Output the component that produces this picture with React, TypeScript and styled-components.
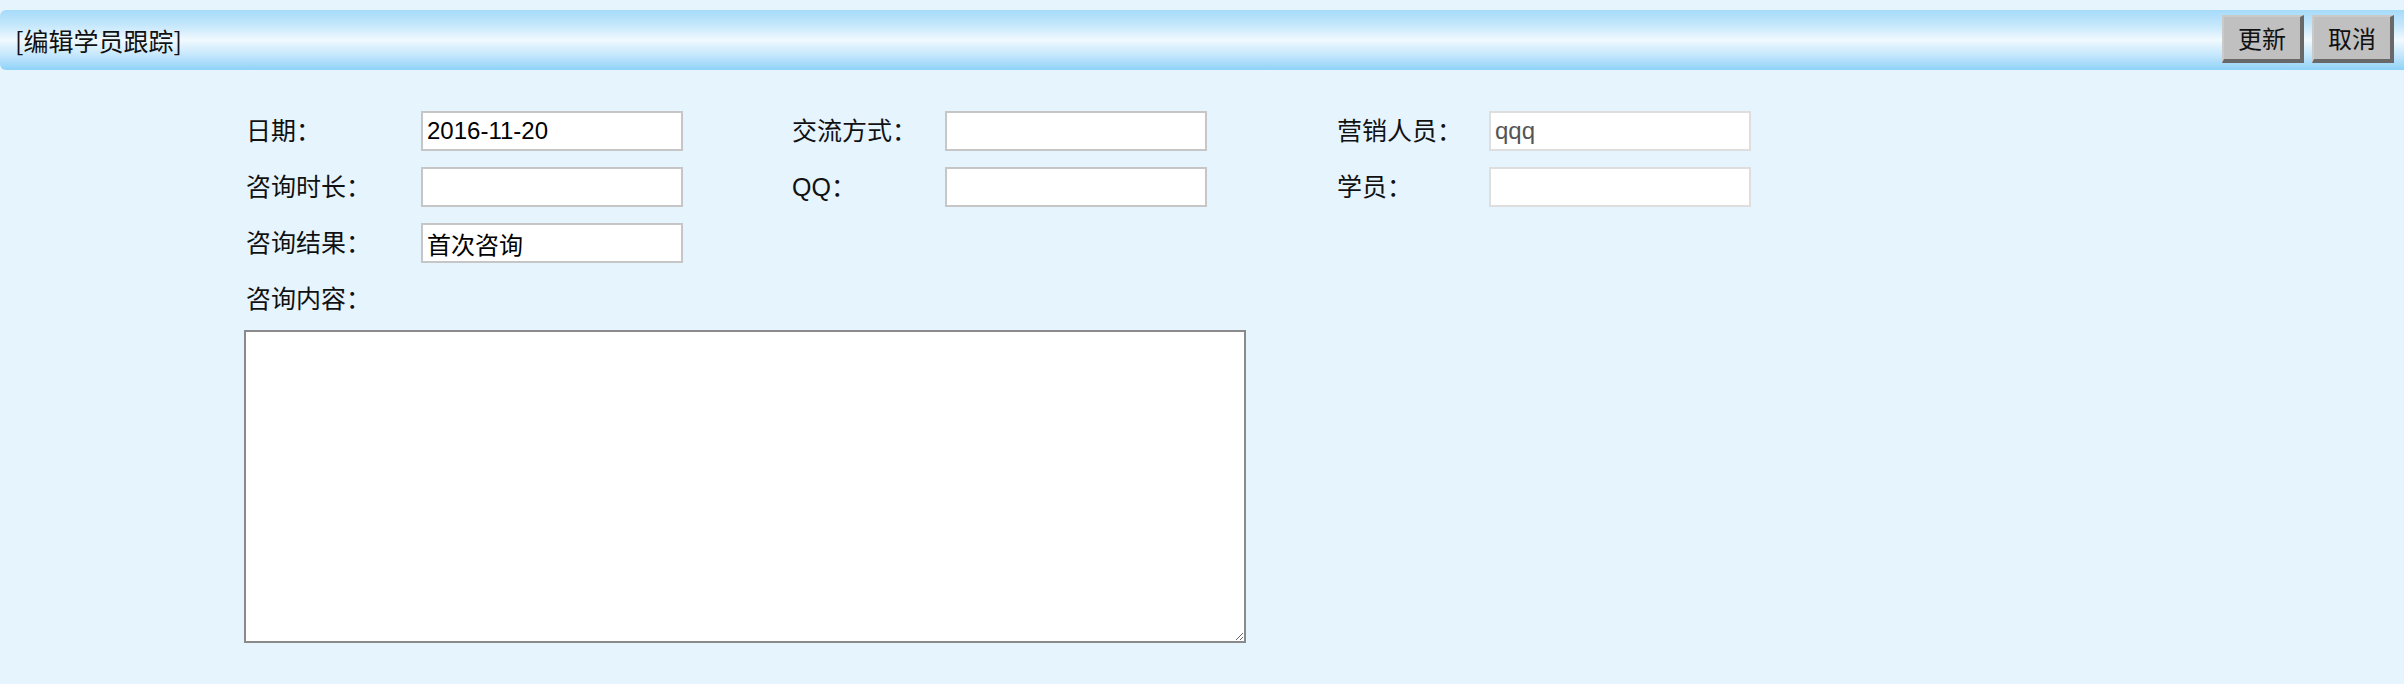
import React, {useState} from 'react'
import styled, {createGlobalStyle} from 'styled-components'

const GlobalStyle = createGlobalStyle`
  html, body {
    margin: 0;
    padding: 0;
    background: #e6f4fe;
    font-family: "Liberation Sans", "Noto Sans CJK SC", sans-serif;
    color: #111;
  }
`

const PageDiv = styled.div`
  padding-top: 10px;
  min-height: 674px;
`

const TitleBar = styled.div`
  display: flex;
  align-items: center;
  justify-content: space-between;
  height: 60px;
  padding: 0 10px 0 15px;
  border-radius: 6px 0 0 6px;
  background: linear-gradient(to bottom, #a6dbfa 0%, #c4e7fc 25%, #f1f9fe 50%, #bfe5fc 78%, #8ed2f8 100%);
`

const TitleText = styled.div`
  font-family: "Noto Sans CJK SC", sans-serif;
  font-size: 25px;
  line-height: 30px;
`

const ButtonGroup = styled.div`
  display: flex;
  gap: 8px;
  margin-top: -2px;
`

const BarButton = styled.button`
  box-sizing: border-box;
  width: 82px;
  height: 48px;
  padding: 0 0 2px;
  font-family: "Liberation Sans", "Noto Sans CJK SC", sans-serif;
  font-size: 24px;
  color: #111;
  background: #c0c0c0;
  border-style: solid;
  border-width: 2px 4px 4px 2px;
  border-color: #cacaca #686868 #686868 #cacaca;
  cursor: pointer;
`

const FormGrid = styled.div`
  display: grid;
  grid-template-columns: 175px 371px 153px 392px 152px 262px;
  grid-auto-rows: 56px;
  align-items: center;
  margin-top: 33px;
  padding-left: 246px;
`

const Label = styled.label`
  font-size: 25px;
  line-height: 30px;
  white-space: nowrap;
`

const TextInput = styled.input<{$dim?: boolean}>`
  box-sizing: border-box;
  width: 262px;
  height: 40px;
  padding: 0 4px;
  font-family: "Liberation Sans", "Noto Sans CJK SC", sans-serif;
  font-size: 24px;
  color: ${p => p.$dim ? '#555' : '#000'};
  background: #fff;
  border: 2px solid ${p => p.$dim ? '#dedede' : '#c6c6c6'};
  outline: none;
`

const Spacer = styled.div`
  grid-column: span 4;
`

const NotesArea = styled.textarea`
  display: block;
  box-sizing: border-box;
  width: 1002px;
  height: 313px;
  margin: 3px 0 0 244px;
  padding: 4px;
  font-family: "Liberation Sans", "Noto Sans CJK SC", sans-serif;
  font-size: 24px;
  background: #fff;
  border: 2px solid #8a8a8a;
  outline: none;
`

const EditTrackApp = () => {
	const [date, setDate] = useState('2016-11-20')
	const [result, setResult] = useState('首次咨询')
	const [content, setContent] = useState('')

	return (
		<PageDiv>
			<GlobalStyle/>
			<TitleBar>
				<TitleText>[编辑学员跟踪]</TitleText>
				<ButtonGroup>
					<BarButton>更新</BarButton>
					<BarButton>取消</BarButton>
				</ButtonGroup>
			</TitleBar>

			<FormGrid>
				<Label>日期：</Label>
				<div><TextInput value={date} onChange={e => setDate(e.target.value)}/></div>
				<Label>交流方式：</Label>
				<div><TextInput/></div>
				<Label>营销人员：</Label>
				<div><TextInput $dim readOnly value="qqq"/></div>

				<Label>咨询时长：</Label>
				<div><TextInput/></div>
				<Label>QQ：</Label>
				<div><TextInput/></div>
				<Label>学员：</Label>
				<div><TextInput $dim readOnly/></div>

				<Label>咨询结果：</Label>
				<div><TextInput value={result} onChange={e => setResult(e.target.value)}/></div>
				<Spacer/>

				<Label>咨询内容：</Label>
			</FormGrid>
			<NotesArea value={content} onChange={e => setContent(e.target.value)}/>
		</PageDiv>
	)
}

export default EditTrackApp
